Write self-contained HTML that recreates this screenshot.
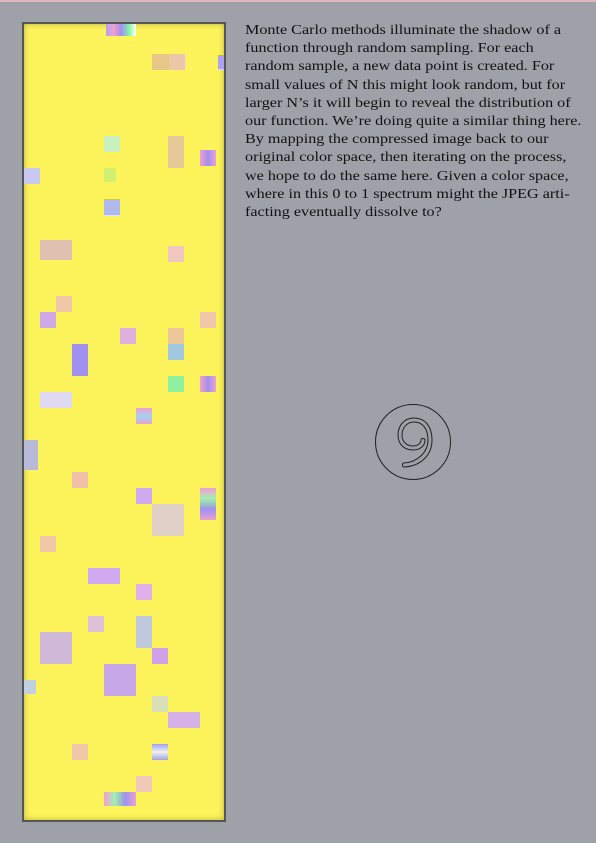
<!DOCTYPE html>
<html><head><meta charset="utf-8"><style>
body{margin:0;width:596px;height:843px;background:#9fa1a9;position:relative;overflow:hidden;font-family:"Liberation Serif",serif}
.top{position:absolute;left:0;top:0;width:596px;height:2px;background:#e0b8c0}
.panel{position:absolute;left:22px;top:22px;width:200px;height:796px;background:#fdf35a;border:2px solid #55565a;box-shadow:inset 0 0 6px rgba(120,110,40,.5)}
.p{position:absolute}
.txt{position:absolute;left:245px;top:21px;font-size:13.8px;line-height:18.2px;color:#111;white-space:nowrap;transform:scaleX(1.17);transform-origin:0 0}
</style></head><body>
<div class="top"></div>
<div class="panel">
<div class="p" style="left:82px;top:0;width:30px;height:12px;background:linear-gradient(90deg,#b8a0f0,#f0a0d0,#a090f0,#80f0a0,#fff)"></div>
<div class="p" style="left:128px;top:30px;width:20px;height:16px;background:#e8c888"></div>
<div class="p" style="left:145px;top:30px;width:16px;height:16px;background:#ecc8a8"></div>
<div class="p" style="left:194px;top:31px;width:6px;height:14px;background:#b0a0f0"></div>
<div class="p" style="left:80px;top:112px;width:16px;height:16px;background:#c8f0c0"></div>
<div class="p" style="left:144px;top:112px;width:16px;height:32px;background:#e4c898"></div>
<div class="p" style="left:176px;top:126px;width:16px;height:16px;background:linear-gradient(90deg,#f0a0d0,#a090f0,#f0a0d0)"></div>
<div class="p" style="left:0;top:144px;width:16px;height:16px;background:#c8c8f0"></div>
<div class="p" style="left:80px;top:144px;width:12px;height:14px;background:#d0f070"></div>
<div class="p" style="left:80px;top:175px;width:16px;height:16px;background:#b0b8f0"></div>
<div class="p" style="left:16px;top:216px;width:32px;height:20px;background:#e0c0b0"></div>
<div class="p" style="left:144px;top:222px;width:16px;height:16px;background:#f0c8c0"></div>
<div class="p" style="left:32px;top:272px;width:16px;height:16px;background:#f0c8a8"></div>
<div class="p" style="left:16px;top:288px;width:16px;height:16px;background:#d0a8e8"></div>
<div class="p" style="left:176px;top:288px;width:16px;height:16px;background:#eec8a8"></div>
<div class="p" style="left:144px;top:304px;width:16px;height:16px;background:#ecc898"></div>
<div class="p" style="left:96px;top:304px;width:16px;height:16px;background:#e0b0e0"></div>
<div class="p" style="left:48px;top:320px;width:16px;height:32px;background:#a090f0"></div>
<div class="p" style="left:144px;top:320px;width:16px;height:16px;background:#a0c8e0"></div>
<div class="p" style="left:144px;top:352px;width:16px;height:16px;background:#90f0a0"></div>
<div class="p" style="left:176px;top:352px;width:16px;height:16px;background:linear-gradient(90deg,#f0a0d0,#a090f0,#f0a0d0)"></div>
<div class="p" style="left:16px;top:368px;width:32px;height:16px;background:#e0d8f0"></div>
<div class="p" style="left:112px;top:384px;width:16px;height:16px;background:linear-gradient(#f0a0d0,#a0d0f0,#f0a0d0)"></div>
<div class="p" style="left:0;top:416px;width:14px;height:30px;background:#b8b8d8"></div>
<div class="p" style="left:48px;top:448px;width:16px;height:16px;background:#f0c0a8"></div>
<div class="p" style="left:112px;top:464px;width:16px;height:16px;background:#d0a8f0"></div>
<div class="p" style="left:176px;top:464px;width:16px;height:32px;background:linear-gradient(#f0a0d0,#a0f0b0,#a090f0,#f0a0d0)"></div>
<div class="p" style="left:128px;top:480px;width:32px;height:32px;background:#e0d0c8"></div>
<div class="p" style="left:16px;top:512px;width:16px;height:16px;background:#f0c8a8"></div>
<div class="p" style="left:64px;top:544px;width:32px;height:16px;background:#d0a8f0"></div>
<div class="p" style="left:112px;top:560px;width:16px;height:16px;background:#e0b0e8"></div>
<div class="p" style="left:64px;top:592px;width:16px;height:16px;background:#e0c0d8"></div>
<div class="p" style="left:112px;top:592px;width:16px;height:32px;background:#c0c8e0"></div>
<div class="p" style="left:16px;top:608px;width:32px;height:32px;background:#d0b8d8"></div>
<div class="p" style="left:128px;top:624px;width:16px;height:16px;background:#d0a0e8"></div>
<div class="p" style="left:80px;top:640px;width:32px;height:32px;background:#c8a8e8"></div>
<div class="p" style="left:0;top:656px;width:12px;height:14px;background:#c0d0e0"></div>
<div class="p" style="left:128px;top:672px;width:16px;height:16px;background:#d8e0b8"></div>
<div class="p" style="left:144px;top:688px;width:32px;height:16px;background:#d8b0e8"></div>
<div class="p" style="left:48px;top:720px;width:16px;height:16px;background:#eec8a8"></div>
<div class="p" style="left:128px;top:720px;width:16px;height:16px;background:linear-gradient(#a0a0f0,#f0f0f0,#a0a0f0)"></div>
<div class="p" style="left:112px;top:752px;width:16px;height:16px;background:#f0c8b8"></div>
<div class="p" style="left:80px;top:768px;width:32px;height:14px;background:linear-gradient(90deg,#f0a0d0,#a0f0b0,#a090f0,#f0a0d0)"></div>
</div>
<div class="txt">Monte Carlo methods illuminate the shadow of a<br>function through random sampling. For each<br>random sample, a new data point is created. For<br>small values of N this might look random, but for<br>larger N’s it will begin to reveal the distribution of<br>our function. We’re doing quite a similar thing here.<br>By mapping the compressed image back to our<br>original color space, then iterating on the process,<br>we hope to do the same here. Given a color space,<br>where in this 0 to 1 spectrum might the JPEG arti-<br>facting eventually dissolve to?</div>
<svg style="position:absolute;left:370px;top:400px" width="90" height="90" viewBox="0 0 90 90" fill="none" stroke="#222" stroke-width="1">
<circle cx="43" cy="42" r="37.5"/>
<path d="M34 63 C48 62 58 52 58 40 C58 28 52 22 44 22 C36 22 32 29 32 35 C32 42 37 46 43 46 C48 46 51 43 51 40"/>
<path d="M34 67 C52 66 62 54 62 40 C62 25 54 18 44 18 C33 18 28 27 28 35 C28 45 35 50 43 50 C50 50 55 46 55 40"/>
<path d="M34 63 C32 63 32 67 34 67 M51 40 C51 38 55 38 55 40"/>
</svg>
</body></html>
